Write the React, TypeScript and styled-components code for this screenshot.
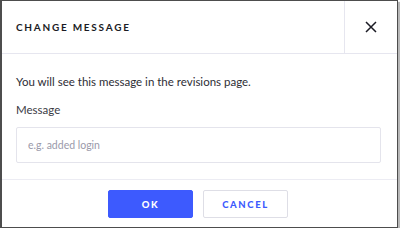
import React, { useState } from 'react';
import styled, { createGlobalStyle } from 'styled-components';

const GlobalStyle = createGlobalStyle`
  html, body {
    margin: 0;
    padding: 0;
    background: #ffffff;
  }
  body {
    font-family: Lato, "Liberation Sans", sans-serif;
  }
`;

const Dialog = styled.div`
  box-sizing: border-box;
  width: 398px;
  height: 228px;
  display: flex;
  flex-direction: column;
  background: #ffffff;
  border: 1px solid #4d4d4d;
  border-left-width: 2px;
  box-shadow: 2px 2px 1px rgba(0, 0, 0, 0.28);
`;

const Header = styled.div`
  display: flex;
  height: 52px;
  border-bottom: 1px solid #e6e6ef;
`;

const Title = styled.h2`
  flex: 1;
  margin: 0;
  padding-left: 14px;
  display: flex;
  align-items: center;
  font-size: 10px;
  font-weight: 700;
  letter-spacing: 1.75px;
  color: #1b1b24;
`;

const CloseButton = styled.button`
  width: 53px;
  border: none;
  border-left: 1px solid #e6e6ef;
  background: transparent;
  display: flex;
  align-items: center;
  justify-content: center;
  padding: 0;
  cursor: pointer;
`;

const Body = styled.div`
  flex: 1;
  display: flex;
  flex-direction: column;
  padding: 21px 16px 0 14px;
  border-bottom: 1px solid #ececf3;
`;

const Intro = styled.p`
  margin: 0 0 15px;
  font-size: 11.5px;
  color: #2d2d35;
`;

const Label = styled.label`
  font-size: 11.5px;
  color: #3a3a44;
  margin-bottom: 11px;
`;

const Field = styled.div`
  box-sizing: border-box;
  height: 36px;
  display: flex;
  align-items: center;
  padding-left: 11px;
  border: 1px solid #e4e4ec;
  border-radius: 2px;
`;

const MessageInput = styled.input`
  flex: 1;
  min-width: 0;
  border: none;
  padding: 0;
  margin: 0;
  background: transparent;
  font-family: inherit;
  font-size: 10.5px;
  color: #2d2d35;
  outline: none;
  &::placeholder {
    color: #9a9aaa;
  }
`;

const Footer = styled.div`
  height: 46px;
  display: flex;
  justify-content: center;
  align-items: center;
  gap: 10px;
  padding-right: 3px;
  padding-top: 1px;
`;

const Button = styled.button<{ $primary?: boolean }>`
  box-sizing: border-box;
  width: 85px;
  height: 28px;
  border-radius: 2px;
  font-family: inherit;
  font-size: 9.5px;
  font-weight: 900;
  letter-spacing: 1.6px;
  cursor: pointer;
  background: ${p => (p.$primary ? '#3d5afe' : '#ffffff')};
  color: ${p => (p.$primary ? '#ffffff' : '#3d5afe')};
  border: 1px solid ${p => (p.$primary ? '#3d5afe' : '#dedee6')};
`;

export default function App() {
  const [message, setMessage] = useState('');

  return (
    <>
      <GlobalStyle />
      <Dialog>
        <Header>
          <Title>CHANGE MESSAGE</Title>
          <CloseButton type="button" aria-label="Close">
            <svg width="12" height="12" viewBox="0 0 12 12">
              <path d="M1 1 L11 11 M11 1 L1 11" stroke="#1b1b24" strokeWidth="1.5" fill="none" />
            </svg>
          </CloseButton>
        </Header>
        <Body>
          <Intro>You will see this message in the revisions page.</Intro>
          <Label htmlFor="msg">Message</Label>
          <Field>
            <MessageInput
              id="msg"
              type="text"
              value={message}
              onChange={e => setMessage(e.target.value)}
              placeholder="e.g. added login"
            />
          </Field>
        </Body>
        <Footer>
          <Button type="button" $primary>OK</Button>
          <Button type="button">CANCEL</Button>
        </Footer>
      </Dialog>
    </>
  );
}
